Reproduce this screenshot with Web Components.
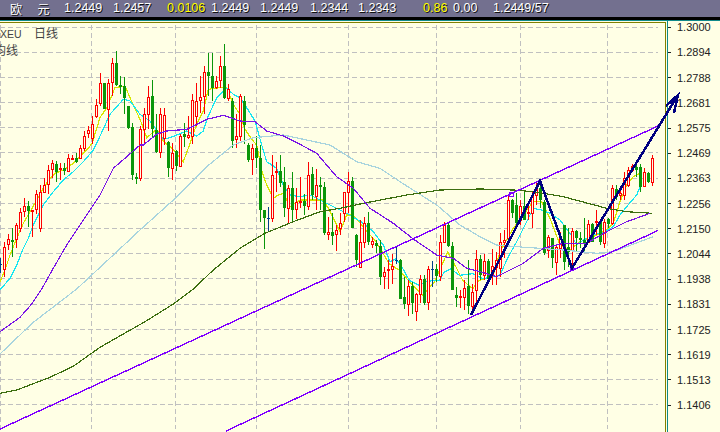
<!DOCTYPE html>
<html>
<head>
<meta charset="utf-8">
<style>
  html, body { margin: 0; height: 100%; overflow: hidden; background: #ffffe5; }
</style>
</head>
<body>
<fx-terminal>
  <fx-quote-bar slot="bar">
    <span style="width:64px;padding-left:10px;box-sizing:border-box;word-spacing:12.7px;font-family:'Noto Sans CJK SC',sans-serif;font-size:12px">欧 元</span>
    <span style="width:49px">1.2449</span>
    <span style="width:54px">1.2457</span>
    <span style="width:44px;color:#ffff00">0.0106</span>
    <span style="width:49px">1.2449</span>
    <span style="width:50px">1.2449</span>
    <span style="width:48px">1.2344</span>
    <span style="width:65px">1.2343</span>
    <span style="width:30px;color:#ffff00">0.86</span>
    <span style="width:40px">0.00</span>
    <span>1.2449/57</span>
  </fx-quote-bar>
  <fx-plot slot="plot"></fx-plot>
  <fx-price-axis slot="axis"
    prices="1.3000 1.2894 1.2788 1.2681 1.2575 1.2469 1.2363 1.2256 1.2150 1.2044 1.1938 1.1831 1.1725 1.1619 1.1513 1.1406"></fx-price-axis>
  <fx-wave-overlay slot="overlay"></fx-wave-overlay>
</fx-terminal>

<script>
// polyline traced in sections: [x0, y0, "x,y x,y ..."], x and y in 3x units
const trace = (sections) =>
  sections.map(([x0, y0, s]) =>
    s.split(" ").map((p) => {
      const [x, y] = p.split(",").map(Number);
      return (x0 + x / 3).toFixed(1) + "," + (y0 + y / 3).toFixed(1);
    }).join(" ")
  ).join(" ");

// candles: kind,high,top,bottom,low in 3x units from y0, one per 4px starting at x0
const CANDLES = [
  [0, 144, `b,340,358,360,385`],
  [4, 144, `r,290,305,372,395 r,267,283,298,315 g,250,286,290,335 r,233,240,283,308 r,190,202,248,262
    r,160,184,197,215 g,168,183,197,245 r,195,195,197,275 r,135,148,193,207 r,120,142,248,260
    r,100,121,142,145 r,60,76,118,148 r,45,55,71,100 g,48,57,80,110 r,55,68,71,105
    g,55,70,78,90 r,28,40,78,80 r,30,40,41,42 g,25,39,50,55 r,0,10,40,42`],
  [84, 0, `r,390,405,440,450 r,375,388,395,410 r,345,370,412,430 r,295,313,345,350 r,215,247,307,315
    g,245,247,325,325 r,235,247,325,390 r,170,187,242,285 g,150,185,252,255 g,225,253,257,280
    g,228,255,290,340 g,315,315,380,385 g,365,378,522,537 g,517,528,535,549 r,375,385,532,539
    r,320,340,385,425 r,255,287,340,385 g,237,285,385,410 g,340,388,452,457 r,322,340,452,470
    r,320,343,410,432 g,420,423,500,527 r,425,457,500,537 g,447,450,495,510 r,400,405,494,497
    g,365,400,408,437 r,345,403,407,415 r,278,298,405,430 r,245,300,345,375 r,225,287,297,335
    r,195,213,285,340 g,155,213,225,285 g,155,225,262,300 r,225,240,258,265 r,165,195,238,260
    g,130,195,290,295 r,250,265,290,300 g,290,300,420,440 r,340,405,415,440 r,280,285,405,420
    g,285,300,372,430 g,425,432,477,482 r,430,442,475,522 g,405,442,470,502`],
  [260, 144, `g,0,40,195,230 g,195,195,220,312 b,187,220,224,258 r,30,90,218,230 r,50,77,79,140
    g,30,78,115,125 g,65,112,190,215 r,120,130,188,235 g,82,128,195,230 r,130,172,193,222
    r,95,168,170,190 g,148,168,182,210 r,50,90,182,195 g,65,88,150,165 r,72,120,152,195
    g,95,120,125,195 g,110,125,265,270 r,215,262,268,285 g,205,262,272,300 r,240,255,268,318
    r,205,235,250,270 r,140,140,205,232 r,82,108,142,205 g,95,108,250,240 g,268,270,345,365
    r,225,290,365,350 r,215,235,290,310 g,200,235,290,300 r,277,288,296,308 g,285,293,302,325`],
  [380, 216, `g,70,88,180,205 r,150,165,176,215 r,130,155,160,215 r,110,148,155,200 b,88,130,133,140
    g,125,128,245,245 g,180,240,262,275 r,190,207,260,297 g,195,207,258,290 r,228,232,283,312
    r,175,186,230,258 g,175,186,258,265 r,148,156,256,280 b,132,155,158,210 g,140,155,177,195
    r,55,76,178,192 r,15,25,74,75 g,15,25,88,90 g,75,88,218,220 g,210,235,243,270
    r,220,238,240,272 r,190,213,240,280 g,130,208,267,290 r,200,226,268,295 r,100,127,218,265
    g,115,127,175,190 r,110,133,175,190 g,125,133,185,200 r,95,148,175,205`],
  [496, 144, `r,320,345,365,420 r,265,290,370,395 r,255,285,290,340 r,150,165,280,300 g,162,165,205,220
    g,145,180,235,250 r,165,183,225,240 g,140,183,225,225 r,170,200,203,225 r,140,150,205,250
    r,110,128,150,180 g,108,130,165,190 g,165,170,325,330 r,270,275,315,340 g,280,280,340,370
    r,300,307,352,390 r,260,275,310,340 g,240,240,350,375 g,250,305,320,365 r,250,258,315,375
    g,255,258,278,320 g,262,278,285,310 g,220,285,295,325 r,225,238,290,295 g,235,238,290,290
    r,195,228,232,270 g,222,232,290,300 r,222,232,295,310 g,220,222,238,250 r,120,130,235,240
    g,120,132,155,165 r,130,145,150,165 r,80,98,150,165 r,65,75,120,125 r,58,62,75,80
    g,45,65,75,95 g,58,65,125,140 r,70,82,122,125 g,80,85,110,115 r,30,38,110,122`]
];

// fast averages go under the candles, slow ones over them
const FAST_LINES = [
  ["#d6e600", 1.2, [
    [0, 144, "0,410 15,375 30,330 50,280 70,235 90,200 110,165 130,130 150,100 165,85 190,75 220,55 240,35 265,10 277,-7"],
    [0, 0, "300,350 320,320 345,260 375,255 390,290 420,355 440,410 470,385 490,420 510,437"],
    [0, 144, "520,15 550,50 565,10"],
    [0, 0, "590,370 610,330 625,265 660,260 680,260 700,310 720,340"],
    [240, 0, "15,385 35,415 50,432"],
    [240, 144, "66,80 80,120 100,160 115,150 130,145 150,185 180,165 250,165 265,190 300,260 320,210 340,210"],
    [376, 216, "0,75 25,115 40,140 70,160 110,205 140,235 175,195 215,105 240,150 260,190 290,215 310,190 350,180"],
    [480, 144, "60,320 100,250 130,210 160,170 185,170 210,220 240,300 270,315 300,290 330,280 360,265 385,250 400,235 420,170 440,120 460,95 480,85"]
  ]],
  ["#17e6f2", 1.2, [
    [0, 144, "0,435 30,400 50,360 70,310 85,280 100,240 130,180 160,140 190,105 220,80 250,50 280,15 290,-5"],
    [0, 0, "330,340 370,295 390,300 420,340 450,360 490,415 510,410 560,390 590,405 610,390 625,345 650,290 680,262 700,280 720,290"],
    [240, 0, "20,320 45,360 65,432"],
    [240, 144, "80,50 110,70 130,120 150,150 180,155 210,150 250,170 290,190 330,210 370,235 400,260 430,300 450,350"],
    [376, 216, "60,125 75,145 100,190 130,205 150,195 175,190 190,190 205,165 225,155 250,175 290,170 320,185 350,180"],
    [480, 144, "60,390 85,335 110,290 135,240 160,190 185,195 210,205 240,225 270,265 290,300 310,285 340,270 370,262 400,245 420,210 440,185 470,150 480,125"]
  ]]
];

const SLOW_LINES = [
  ["#a8d4de", 1.2, [
    [0, 288, "0,195 100,100 230,0"],
    [0, 144, "340,330 420,255 520,165 620,65 700,0"],
    [240, 0, "40,410 130,402 270,432"],
    [240, 144, "350,50 420,70 480,110 590,180 660,240 720,275"],
    [480, 144, "50,300 110,305 250,315 350,325 400,320 520,275"]
  ]],
  ["#3c6e10", 1.2, [
    [0, 288, "0,313 50,303 150,265 220,232 300,175 440,95 520,45 580,0"],
    [0, 144, "640,375 720,310"],
    [240, 144, "75,265 160,230 240,200 300,190 370,175 500,150 600,135 720,132"],
    [480, 144, "100,135 160,140 250,155 380,190 440,200 515,205"]
  ]],
  ["#7a14e6", 1.2, [
    [0, 288, "0,128 60,85 95,45 125,0"],
    [0, 144, "160,370 200,300 260,210 300,150 340,70 380,35 420,0"],
    [0, 0, "430,432 470,400 500,390 560,385 620,355 670,343 720,360"],
    [240, 0, "45,362 80,390 130,405 180,430"],
    [240, 144, "230,25 290,95 340,130 390,190 460,235 520,282 590,330 640,340 680,370 720,380"],
    [480, 144, "50,395 130,355 190,310 250,295 320,295 380,260 440,230 510,205"]
  ]]
];

const GRID_X = [0, 91, 175, 256, 348, 436, 520, 607];
const GRID_Y = [26, 51, 76, 101, 126, 151, 177, 202, 227, 252, 277, 303, 328, 353, 378, 403];
const COLORS = { r: "#ff0000", g: "#0a960a", b: "#00408c" };

function candleMarkup() {
  let out = "";
  CANDLES.forEach(([x0, y0, list]) => {
    list.trim().split(/\s+/).forEach((item, i) => {
      const [kind, hi, top, bot, lo] = item.split(",");
      const x = x0 + i * 4;
      const y = (v) => Math.round(y0 + v / 3);
      const c = COLORS[kind];
      out += `<rect x="${x}" y="${y(hi)}" width="1" height="${Math.max(y(lo) - y(hi), 1)}" fill="${c}"/>`;
      if (kind === "g") {
        out += `<rect x="${x - 1}" y="${y(top)}" width="3" height="${Math.max(y(bot) - y(top), 1)}" fill="${c}"/>`;
      } else if (kind === "r") {
        out += `<rect x="${x - 0.5}" y="${y(top) + 0.5}" width="2" height="${Math.max(y(bot) - y(top), 1)}" fill="#ffffe5" stroke="${c}"/>`;
      } else {
        out += `<rect x="${x - 1}" y="${y(top)}" width="3" height="1" fill="${c}"/>`;
      }
    });
  });
  return out;
}

const linesMarkup = (lines) => lines.map(([color, w, sections]) =>
  `<polyline fill="none" stroke="${color}" stroke-width="${w}" points="${trace(sections)}"/>`).join("");

class FxTerminal extends HTMLElement {
  constructor() {
    super();
    this.attachShadow({ mode: "open" }).innerHTML = `
      <style>
        :host { display: block; position: relative; width: 720px; height: 432px; overflow: hidden; }
        .chart { display: flex; height: 412px; border-top: 1px solid #0f8a8a; }
      </style>
      <slot name="bar"></slot>
      <div class="chart">
        <slot name="plot"></slot>
        <slot name="axis"></slot>
      </div>
      <slot name="overlay"></slot>`;
  }
}

class FxQuoteBar extends HTMLElement {
  constructor() {
    super();
    this.attachShadow({ mode: "open" }).innerHTML = `
      <style>
        :host {
          display: flex; align-items: center; box-sizing: content-box; height: 17px;
          background: #73708f; border-bottom: 3px solid #000; color: #fff;
          font: 12.5px/17px "Liberation Sans", "Noto Sans CJK SC", sans-serif;
          text-shadow: 1px 1px 0 #111;
        }
        ::slotted(span) { display: block; flex: none; white-space: nowrap; }
      </style>
      <slot></slot>`;
  }
}

class FxPlot extends HTMLElement {
  constructor() {
    super();
    const grid =
      GRID_Y.map((y) => `<line x1="0" x2="658" y1="${y + 0.5}" y2="${y + 0.5}"/>`).join("") +
      GRID_X.map((x) => `<line x1="${x + 0.5}" x2="${x + 0.5}" y1="24" y2="428"/>`).join("");
    this.attachShadow({ mode: "open" }).innerHTML = `
      <style>
        :host {
          display: block; position: relative; flex: none; width: 665px; height: 411px;
          margin-top: 1px; border-top: 1px solid #808000; border-right: 1px solid #808000;
          background: #ffffe5; overflow: hidden;
        }
        svg { display: block; position: absolute; left: 0; top: 0; }
        .legend {
          position: absolute; left: 0; top: 3px; color: #444;
          font: 12px/16px "Liberation Sans", "Noto Sans CJK SC", sans-serif;
        }
        .legend div { white-space: nowrap; }
        .xeu { font-size: 10.5px; display: inline-block; width: 34px; }
        .cut { margin-left: -6px; font-family: "Noto Sans CJK SC", sans-serif; }
      </style>
      <svg width="665" height="410" viewBox="0 22 665 410" shape-rendering="crispEdges">
        <g stroke="#c0c0c0" stroke-dasharray="5 3">${grid}</g>
        ${linesMarkup(FAST_LINES)}
        ${candleMarkup()}
        ${linesMarkup(SLOW_LINES)}
        <g fill="none" stroke="#8000ff" stroke-width="1.4">
          <line x1="0" y1="428" x2="658" y2="125"/>
          <line x1="226" y1="430" x2="658" y2="229.5"/>
        </g>
      </svg>
      <div class="legend">
        <div><span class="xeu">XEU</span>日线</div>
        <div class="cut">均线</div>
      </div>`;
  }
}

class FxPriceAxis extends HTMLElement {
  constructor() {
    super();
    const rows = this.getAttribute("prices").split(" ")
      .map((p) => `<div class="row"><i></i><span>${p}</span></div>`).join("");
    this.attachShadow({ mode: "open" }).innerHTML = `
      <style>
        :host {
          display: flex; flex-direction: column; gap: 17.2px; box-sizing: border-box;
          flex: none; width: 54px; height: 412px; margin-left: 1px; padding-top: 2.3px;
          border-left: 1px solid #0f8a8a; background: #ffffe5; color: #222;
          font: 11px/8px "Liberation Sans", sans-serif;
        }
        .row { display: flex; align-items: center; height: 8px; }
        i { display: block; width: 3px; height: 1px; background: #222; margin-right: 6px; }
      </style>
      ${rows}`;
  }
}

class FxWaveOverlay extends HTMLElement {
  constructor() {
    super();
    this.attachShadow({ mode: "open" }).innerHTML = `
      <style>
        :host { display: block; position: absolute; left: 0; top: 0; pointer-events: none; }
        svg { display: block; }
      </style>
      <svg width="720" height="432" shape-rendering="crispEdges">
        <rect x="509.5" y="192.5" width="4" height="4" fill="none" stroke="#8000ff"/>
        <rect x="570" y="267" width="4" height="4" fill="#8000ff"/>
        <g fill="none" stroke="#000080" stroke-width="2.5" stroke-linejoin="miter">
          <polyline points="471,315 540,181 572,268 678,95"/>
          <polyline points="666,106 678,95 674,113"/>
        </g>
      </svg>`;
  }
}

customElements.define("fx-terminal", FxTerminal);
customElements.define("fx-quote-bar", FxQuoteBar);
customElements.define("fx-plot", FxPlot);
customElements.define("fx-price-axis", FxPriceAxis);
customElements.define("fx-wave-overlay", FxWaveOverlay);
</script>
</body>
</html>
